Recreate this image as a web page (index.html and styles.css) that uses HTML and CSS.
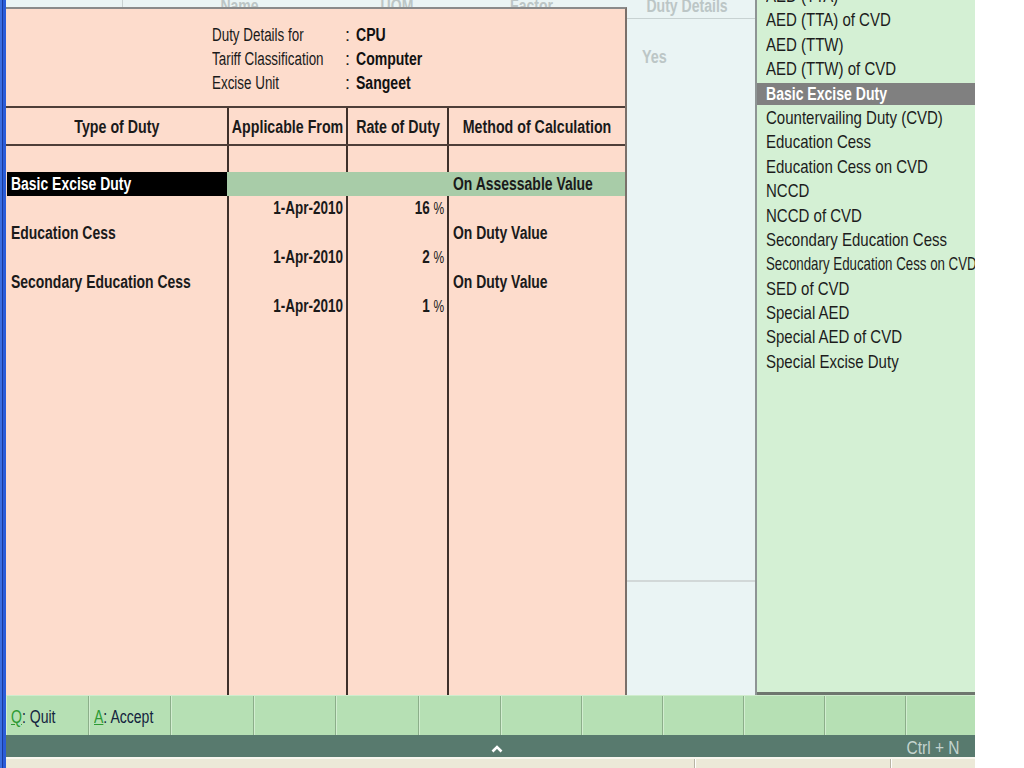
FILE: index.html
```html
<!DOCTYPE html>
<html>
<head>
<meta charset="utf-8">
<link rel="stylesheet" href="styles.css">
</head>
<body>
<div class="screen">
  <div class="edge"></div>
  <div class="app">
    <div class="work">
      <div class="back">
        <div class="bg-head">
          <div class="bh bh-a"></div>
          <div class="bh"><span class="t">Name</span></div>
          <div class="bh"><span class="t">UOM</span></div>
          <div class="bh"><span class="t">Factor</span></div>
          <div class="bh bh-duty"><span class="t">Duty Details</span></div>
        </div>
        <div class="bg-body">
          <div class="bg-yes"><span class="t">Yes</span></div>
        </div>
        <div class="bg-foot"></div>

        <div class="popup">
          <div class="info">
            <div class="info-grid">
              <span class="lbl"><span class="t">Duty Details for</span></span><span class="col">:</span><span class="val"><span class="t">CPU</span></span>
              <span class="lbl"><span class="t">Tariff Classification</span></span><span class="col">:</span><span class="val"><span class="t">Computer</span></span>
              <span class="lbl"><span class="t">Excise Unit</span></span><span class="col">:</span><span class="val"><span class="t">Sangeet</span></span>
            </div>
          </div>
          <div class="thead row">
            <div class="c c1"><span class="t">Type of Duty</span></div>
            <div class="c c2"><span class="t">Applicable From</span></div>
            <div class="c c3"><span class="t">Rate of Duty</span></div>
            <div class="c c4"><span class="t">Method of Calculation</span></div>
          </div>
          <div class="tbody">
            <div class="row r-blank">
              <div class="c c1"></div><div class="c c2"></div><div class="c c3"></div><div class="c c4"></div>
            </div>
            <div class="row r-sel">
              <div class="c c1"><span class="t">Basic Excise Duty</span></div><div class="c c2"></div><div class="c c3"></div><div class="c c4"><span class="t">On Assessable Value</span></div>
            </div>
            <div class="row r-sub">
              <div class="c c1"></div><div class="c c2 num"><span class="t">1-Apr-2010</span></div><div class="c c3 num"><span class="t">16 <span class="pct">%</span></span></div><div class="c c4"></div>
            </div>
            <div class="row r-main">
              <div class="c c1"><span class="t">Education Cess</span></div><div class="c c2"></div><div class="c c3"></div><div class="c c4"><span class="t">On Duty Value</span></div>
            </div>
            <div class="row r-sub">
              <div class="c c1"></div><div class="c c2 num"><span class="t">1-Apr-2010</span></div><div class="c c3 num"><span class="t">2 <span class="pct">%</span></span></div><div class="c c4"></div>
            </div>
            <div class="row r-main">
              <div class="c c1"><span class="t">Secondary Education Cess</span></div><div class="c c2"></div><div class="c c3"></div><div class="c c4"><span class="t">On Duty Value</span></div>
            </div>
            <div class="row r-sub">
              <div class="c c1"></div><div class="c c2 num"><span class="t">1-Apr-2010</span></div><div class="c c3 num"><span class="t">1 <span class="pct">%</span></span></div><div class="c c4"></div>
            </div>
            <div class="row r-fill">
              <div class="c c1"></div><div class="c c2"></div><div class="c c3"></div><div class="c c4"></div>
            </div>
          </div>
        </div>
      </div>

      <div class="list">
        <ul class="items">
          <li><span class="t">AED (TTA)</span></li>
          <li><span class="t">AED (TTA) of CVD</span></li>
          <li><span class="t">AED (TTW)</span></li>
          <li><span class="t">AED (TTW) of CVD</span></li>
          <li class="sel"><span class="t">Basic Excise Duty</span></li>
          <li><span class="t">Countervailing Duty (CVD)</span></li>
          <li><span class="t">Education Cess</span></li>
          <li><span class="t">Education Cess on CVD</span></li>
          <li><span class="t">NCCD</span></li>
          <li><span class="t">NCCD of CVD</span></li>
          <li><span class="t">Secondary Education Cess</span></li>
          <li class="sq"><span class="t">Secondary Education Cess on CVD</span></li>
          <li><span class="t">SED of CVD</span></li>
          <li><span class="t">Special AED</span></li>
          <li><span class="t">Special AED of CVD</span></li>
          <li><span class="t">Special Excise Duty</span></li>
        </ul>
      </div>
    </div>

    <div class="buttons">
      <div class="btn"><span class="t"><span class="key">Q</span>: Quit</span></div>
      <div class="btn"><span class="t"><span class="key">A</span>: Accept</span></div>
      <div class="btn"></div>
      <div class="btn"></div>
      <div class="btn"></div>
      <div class="btn"></div>
      <div class="btn"></div>
      <div class="btn"></div>
      <div class="btn"></div>
      <div class="btn"></div>
      <div class="btn"></div>
      <div class="btn"></div>
    </div>
    <div class="status">
      <div></div>
      <div class="caret">
        <svg width="12" height="8" viewBox="0 0 12 8"><polyline points="1.5,6.5 6,2 10.5,6.5" fill="none" stroke="#ffffff" stroke-width="2.6"/></svg>
      </div>
      <div class="ctrl"><span class="t">Ctrl + N</span></div>
    </div>
    <div class="taskbar">
      <div class="tb tb1"></div>
      <div class="tb tb2"></div>
      <div class="tb tb3"></div>
    </div>
  </div>
</div>
</body>
</html>
```

FILE: styles.css
```css
* { box-sizing: border-box; }
html, body {
  margin: 0;
  padding: 0;
  background: #ffffff;
  width: 1024px;
  height: 768px;
  overflow: hidden;
}
body {
  font-family: "Liberation Sans", Arial, sans-serif;
  font-size: 18px;
  color: #1a1a1a;
}
.t {
  display: inline-block;
  white-space: nowrap;
  transform: scaleX(var(--sx, 0.78));
  transform-origin: left center;
}
.screen {
  display: flex;
  width: 975px;
  height: 768px;
}
.edge {
  width: 6px;
  flex: none;
  background: linear-gradient(to right, #3a6ee0 0, #3a6ee0 2px, #1a3a9c 2px, #1a3a9c 3px, #2a5cd8 3px, #2a5cd8 6px);
}
.app {
  flex: 1;
  display: flex;
  flex-direction: column;
  min-width: 0;
}
.work {
  height: 695px;
  display: flex;
}

/* background table */
.back {
  width: 751px;
  flex: none;
  position: relative;
  background: #eaf4f4;
  display: flex;
  flex-direction: column;
  border-right: 2px solid #8e9494;
}
.bg-head {
  display: grid;
  grid-template-columns: 117px 234px 80px 190px minmax(0, 1fr);
  height: 19px;
  border-bottom: 1px solid #c8d2d2;
}
.bh {
  height: 13px;
  display: flex;
  justify-content: center;
  align-items: flex-end;
  line-height: 13px;
  font-weight: bold;
  color: #bcc6c6;
  font-size: 18px;
  --sx: 0.78;
}
.bh .t { transform-origin: center; }
.bh-a { border-right: 1px solid #c8d2d2; height: 19px; }
.bh-duty { padding-right: 8px; }
.bg-body {
  flex: 1;
  display: grid;
  grid-template-columns: 621px minmax(0, 1fr);
  padding-top: 26px;
}
.bg-yes {
  grid-column: 2;
  font-weight: bold;
  color: #bcc6c6;
  padding-left: 15px;
  line-height: 24px;
  height: 24px;
  --sx: 0.8;
}
.bg-foot {
  height: 115px;
  border-top: 2px solid #d2d8d8;
}

/* popup */
.popup {
  position: absolute;
  left: 0;
  top: 7px;
  width: 621px;
  bottom: 0;
  background: #fddccc;
  border-top: 2px solid #8a8a8a;
  border-right: 2px solid #7a706a;
  display: flex;
  flex-direction: column;
  overflow: hidden;
}
.info {
  height: 99px;
  border-bottom: 2px solid #4e3e38;
  padding-top: 14px;
  padding-left: 206px;
  flex: none;
}
.info-grid {
  display: grid;
  grid-template-columns: 133px 11px auto;
  grid-auto-rows: 24px;
  line-height: 24px;
  font-size: 18px;
}
.lbl { color: #1a1a1a; --sx: 0.745; white-space: nowrap; }
.col { color: #1a1a1a; }
.val { font-weight: bold; color: #111; --sx: 0.78; white-space: nowrap; }

.row {
  display: grid;
  grid-template-columns: 221px 119px 101px minmax(0, 1fr);
}
.c {
  font-weight: bold;
  font-size: 18px;
  white-space: nowrap;
  min-width: 0;
  --sx: 0.775;
}
.c2, .c3, .c4 { border-left: 2px solid #3e302a; }
.thead {
  height: 38px;
  border-bottom: 2px solid #4e3e38;
  flex: none;
}
.thead .c {
  display: flex;
  justify-content: center;
  align-items: center;
  padding-top: 3px;
  --sx: 0.79;
}
.thead .c .t { transform-origin: center; }
.tbody {
  flex: 1;
  display: flex;
  flex-direction: column;
}
.r-blank { height: 26px; }
.r-sel { height: 24px; }
.r-sub, .r-main { height: 24.5px; }
.r-fill { flex: 1; }
.tbody .c { line-height: 25px; }
.tbody .c1 { padding-left: 5px; }
.tbody .c4 { padding-left: 4px; }
.num {
  display: flex;
  justify-content: flex-end;
  padding-right: 3px;
  --sx: 0.75;
}
.num .t { transform-origin: right center; }
.pct { font-weight: normal; font-size: 16px; }
.r-sel .c1 {
  background: #000;
  color: #fff;
  margin-bottom: 1px;
  margin-left: 1px;
  padding-left: 4px;
  line-height: 24px;
}
.r-sel .c2, .r-sel .c3, .r-sel .c4 {
  background: #a8cca8;
  border-left-color: #a8cca8;
  margin-bottom: 1px;
  line-height: 24px;
}

/* list */
.list {
  flex: 1;
  background: #d4f0d4;
  border-bottom: 3px solid #6e766e;
  overflow: hidden;
}
.items {
  list-style: none;
  margin: -16px 0 0 0;
  padding: 0;
  font-size: 19px;
}
.items li {
  height: 24.4px;
  line-height: 24.4px;
  padding-left: 9px;
  white-space: nowrap;
  color: #1c1c1c;
  --sx: 0.79;
}
.items li.sq { --sx: 0.70; }
.items li.sel {
  background: linear-gradient(transparent 0, transparent 1px, #808080 1px, #808080 23px, transparent 23px);
  color: #fff;
  font-weight: bold;
  font-size: 18px;
  --sx: 0.78;
}

/* buttons */
.buttons {
  height: 40px;
  display: grid;
  grid-template-columns: repeat(6, 82.5px) repeat(5, 81px) minmax(0, 1fr);
  background: #b6e0b4;
  border-top: 1px solid #cfeccd;
}
.btn {
  border-right: 1px solid #8cae8a;
  box-shadow: inset 1px 0 0 #d2eed0;
  line-height: 38px;
  padding-top: 2px;
  padding-left: 5px;
  font-size: 18px;
  color: #14243e;
  white-space: nowrap;
  --sx: 0.78;
}
.btn:last-child { border-right: none; }
.key {
  color: #2e9a34;
  text-decoration: underline;
}
.status {
  height: 22px;
  background: #587a6e;
  display: grid;
  grid-template-columns: 1fr 40px 1fr;
  line-height: 22px;
}
.caret {
  display: flex;
  justify-content: center;
  align-items: center;
  padding-left: 12px;
  padding-top: 3px;
}
.ctrl {
  display: flex;
  justify-content: flex-end;
  padding-right: 15px;
  padding-top: 2px;
  color: #c4d4ce;
  font-size: 18px;
  --sx: 0.86;
}
.ctrl .t { transform-origin: right center; }
.taskbar {
  flex: 1;
  background: #ece9d8;
  border-top: 2px solid #f8f6ee;
  display: flex;
}
.tb1 { width: 689px; border-right: 1px solid #b8b4a4; }
.tb2 { width: 196px; border-right: 1px solid #b8b4a4; border-left: 1px solid #fff; }
.tb3 { flex: 1; border-left: 1px solid #fff; }
```
